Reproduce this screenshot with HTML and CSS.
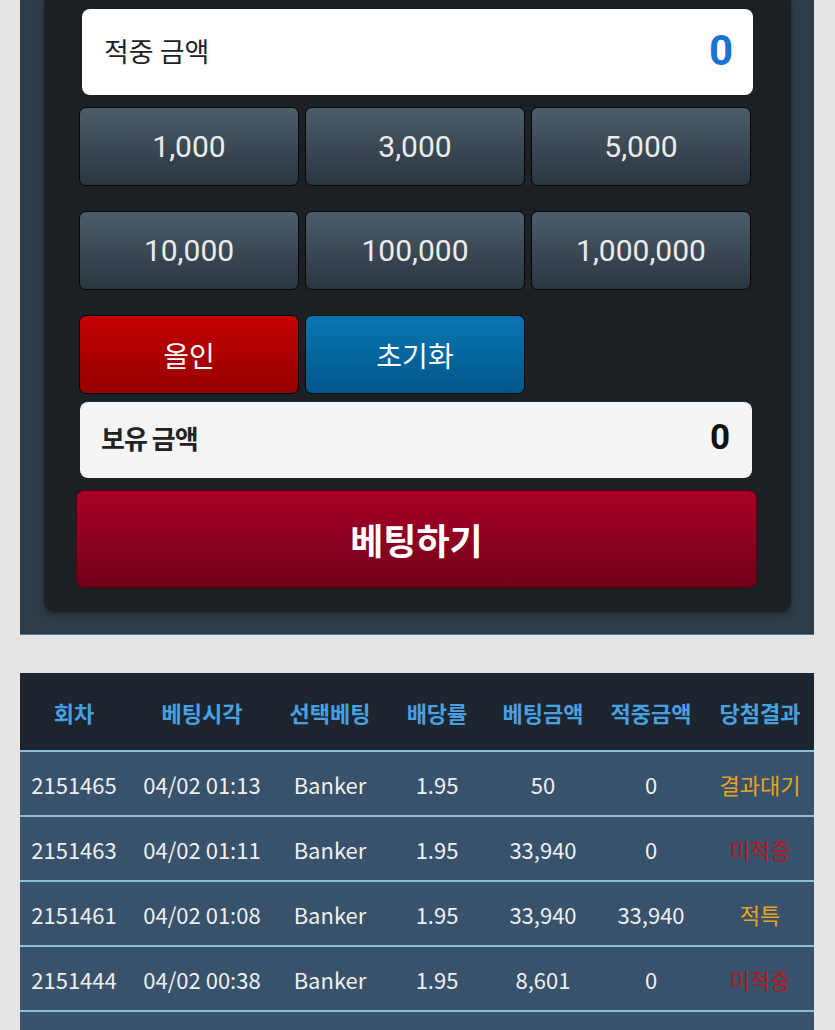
FILE: index.html
```html
<!DOCTYPE html>
<html>
<head>
  <title>Betting</title>
  <meta name="viewport" content="width=device-width, initial-scale=1.0">
  <link rel="stylesheet" href="styles.css">
</head>
<body>
  <div class="wrap">
    <div class="bet-panel">
      <div class="bet-box">
        <div class="win-amount">
          <span class="win-label">적중 금액</span>
          <span class="win-value">0</span>
        </div>

        <div class="chip-grid">
          <button type="button" class="chip">1,000</button>
          <button type="button" class="chip">3,000</button>
          <button type="button" class="chip">5,000</button>
          <button type="button" class="chip">10,000</button>
          <button type="button" class="chip">100,000</button>
          <button type="button" class="chip">1,000,000</button>
          <button type="button" class="chip chip-red">올인</button>
          <button type="button" class="chip chip-blue">초기화</button>
        </div>

        <div class="balance">
          <span class="balance-label">보유 금액</span>
          <span class="balance-value">0</span>
        </div>

        <button type="button" class="bet-btn">베팅하기</button>
      </div>
    </div>

    <table class="history">
      <colgroup>
        <col class="c1"><col class="c2"><col class="c3"><col class="c4"><col class="c5"><col class="c6"><col class="c7">
      </colgroup>
      <thead>
        <tr>
          <th>회차</th>
          <th>베팅시각</th>
          <th>선택베팅</th>
          <th>배당률</th>
          <th>베팅금액</th>
          <th>적중금액</th>
          <th>당첨결과</th>
        </tr>
      </thead>
      <tbody>
        <tr>
          <td>2151465</td>
          <td>04/02 01:13</td>
          <td>Banker</td>
          <td>1.95</td>
          <td>50</td>
          <td>0</td>
          <td class="wait">결과대기</td>
        </tr>
        <tr>
          <td>2151463</td>
          <td>04/02 01:11</td>
          <td>Banker</td>
          <td>1.95</td>
          <td>33,940</td>
          <td>0</td>
          <td class="lose">미적중</td>
        </tr>
        <tr>
          <td>2151461</td>
          <td>04/02 01:08</td>
          <td>Banker</td>
          <td>1.95</td>
          <td>33,940</td>
          <td>33,940</td>
          <td class="wait">적특</td>
        </tr>
        <tr>
          <td>2151444</td>
          <td>04/02 00:38</td>
          <td>Banker</td>
          <td>1.95</td>
          <td>8,601</td>
          <td>0</td>
          <td class="lose">미적중</td>
        </tr>
        <tr>
          <td></td><td></td><td></td><td></td><td></td><td></td><td></td>
        </tr>
      </tbody>
    </table>
  </div>
</body>
</html>
```

FILE: styles.css
```css
* {
  box-sizing: border-box;
}

body {
  margin: 0;
  background-color: #e5e5e5;
  font-family: "Noto Sans CJK KR", "Noto Sans", sans-serif;
}

.wrap {
  padding: 0 21px 0 20px;
}

/* betting panel */
.bet-panel {
  background-color: #2e3c47;
  padding: 0 23px 22px 24px;
  border-bottom: 1px solid #627585;
}

.bet-box {
  background-color: #1b2025;
  border-radius: 0 0 10px 10px;
  box-shadow: 0 3px 6px rgba(0, 0, 0, 0.35);
  padding: 9px 34px 24px 32px;
}

.win-amount {
  display: flex;
  align-items: center;
  justify-content: space-between;
  height: 86px;
  margin: 0 4px 0 6px;
  padding: 0 20px 4px 22px;
  background: #fff;
  border-radius: 8px;
}

.win-label {
  font-size: 27px;
  color: #222;
}

.win-value {
  font-family: Roboto, sans-serif;
  font-weight: bold;
  font-size: 42px;
  color: #1a73d4;
}

.chip-grid {
  display: grid;
  grid-template-columns: repeat(3, 1fr);
  grid-auto-rows: 79px;
  column-gap: 6px;
  row-gap: 25px;
  margin: 12px 6px 0 3px;
}

.chip {
  font-family: Roboto, sans-serif;
  font-size: 30px;
  color: #ececec;
  background: linear-gradient(to bottom, #4c5d6a, #2a353f);
  border: 1px solid #050708;
  border-radius: 7px;
  cursor: pointer;
  padding: 0;
}

.chip-red {
  font-family: "Noto Sans CJK KR", sans-serif;
  font-size: 28px;
  color: #fff;
  background: linear-gradient(to bottom, #c40000, #960000);
}

.chip-blue {
  font-family: "Noto Sans CJK KR", sans-serif;
  font-size: 28px;
  color: #fff;
  background: linear-gradient(to bottom, #0a76b2, #00568a);
}

.balance {
  display: flex;
  align-items: center;
  justify-content: space-between;
  height: 77px;
  margin: 7px 5px 0 4px;
  padding: 0 22px 6px 21px;
  background: #f5f5f5;
  border-top: 1px solid #1c2b48;
  border-radius: 8px;
}

.balance-label {
  font-size: 26px;
  font-weight: bold;
  color: #222;
  letter-spacing: -1px;
}

.balance-value {
  font-family: Roboto, sans-serif;
  font-weight: bold;
  font-size: 35px;
  color: #111;
}

.bet-btn {
  display: block;
  width: 100%;
  height: 98px;
  margin-top: 12px;
  background: linear-gradient(to bottom, #aa0028, #70001a);
  border: 1px solid #5a0012;
  border-radius: 8px;
  color: #fff;
  font-family: "Noto Sans CJK KR", sans-serif;
  font-size: 36px;
  font-weight: bold;
  cursor: pointer;
}

/* history table */
.history {
  width: 100%;
  margin-top: 38px;
  border-collapse: collapse;
  table-layout: fixed;
}

.c1 { width: 108px; }
.c2 { width: 148px; }
.c3 { width: 108px; }
.c4 { width: 106px; }
.c5 { width: 106px; }
.c6 { width: 110px; }
.c7 { width: 108px; }

.history th {
  height: 78px;
  background-color: #1c252d;
  color: #48a0e2;
  font-size: 22px;
  font-weight: bold;
  text-align: center;
  padding: 0;
  border-bottom: 2px solid #8bbddf;
}

.history td {
  height: 65px;
  background-color: #37526a;
  color: #f0f0f0;
  font-size: 22px;
  text-align: center;
  padding: 0;
  border-bottom: 2px solid #8bbddf;
  white-space: nowrap;
}

.history td.wait {
  color: #e9a21e;
}

.history td.lose {
  color: #b3161c;
}
```
